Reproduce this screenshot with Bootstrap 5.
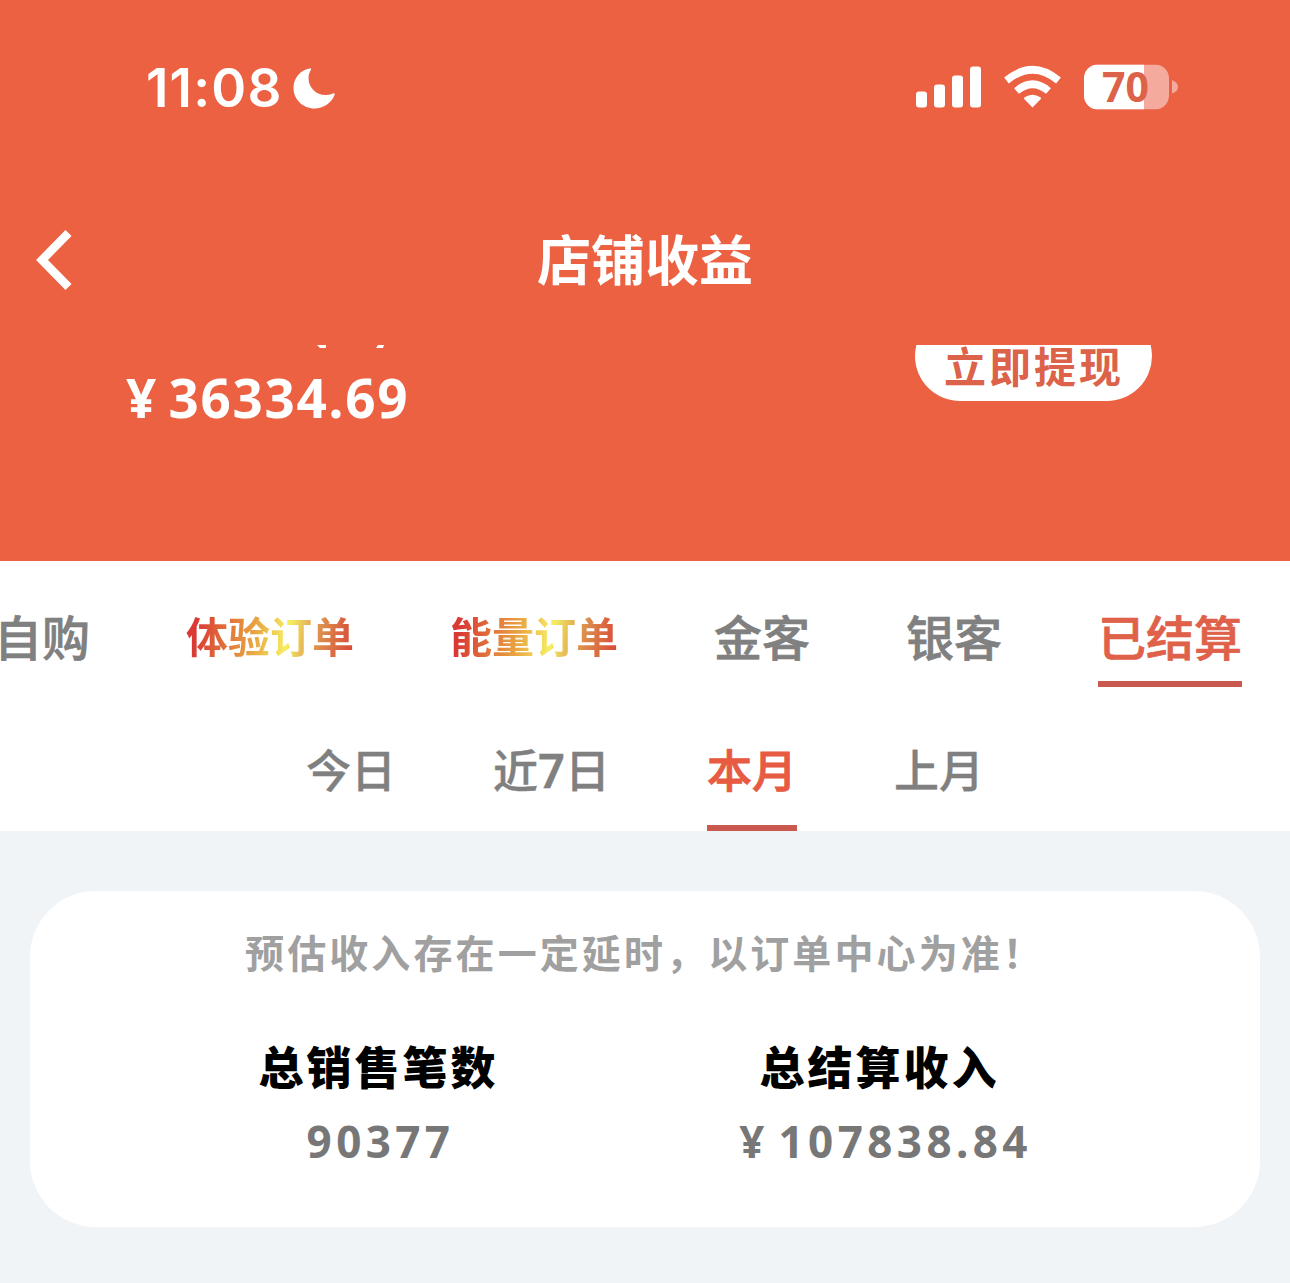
<!DOCTYPE html>
<html lang="zh-CN">
<head>
<meta charset="utf-8">
<meta name="viewport" content="width=device-width, initial-scale=1">
<title>店铺收益</title>
<link rel="stylesheet" href="https://cdn.jsdelivr.net/npm/bootstrap@5.3.0/dist/css/bootstrap.min.css">
<style>
  :root { --brand: #eb6142; --accent: #c9584e; --page: #f1f4f7; }
  body { background: var(--page); font-family: "Noto Sans", "Noto Sans CJK SC", sans-serif; overflow: hidden; }
  .cjk { font-family: "Noto Sans CJK SC", sans-serif; }
  .brand-bg { background: var(--brand); }
  .status-bar { height: 175px; padding: 0 112px 0 146px; }
  .clock { font: 600 53px/60px Inter, sans-serif; letter-spacing: 1.2px; }
  .title-bar { height: 170px; padding: 0 0 4px 36px; display: grid; grid-template-columns: 36px 1fr 72px; }
  .title-bar svg { margin-top: 3px; }
  .title-text { font-size: 54px; line-height: 60px; font-weight: 700; }
  .balance { height: 216px; padding: 0 138px 0 126px; }
  .amount { font-size: 53px; line-height: 60px; font-weight: 700; letter-spacing: 1.7px; word-spacing: -5px; margin-top: 19px; }
  .withdraw { width: 237px; height: 90px; margin-top: -34px; padding: 17px 0 0 1px; border: 0; border-radius: 45px; background: #fff; color: #dc6249; font-size: 42px; line-height: 60px; font-weight: 700; letter-spacing: 3px; }
  .tabs { height: 135px; padding: 44px 48px 0 0; gap: 96px; }
  .tab-item { font-size: 48px; line-height: 60px; font-weight: 500; color: #808080; -webkit-text-stroke: .7px currentColor; white-space: nowrap; flex: none; height: 82px; }
  .tab-item.on { color: #e0614a; border-bottom: 6px solid var(--accent); }
  .tab-fancy { font-size: 42px; font-weight: 700; line-height: 60px; height: 60px; white-space: nowrap; flex: none; background: linear-gradient(100deg, #d93a34 8%, #e8a040 40%, #f6ee62 60%, #dd9a50 75%, #d94a38 97%); -webkit-background-clip: text; background-clip: text; color: transparent; }
  .periods { height: 135px; gap: 97px; padding-top: 43px; }
  .period { font-size: 45px; line-height: 60px; font-weight: 500; color: #808080; -webkit-text-stroke: .4px currentColor; height: 92px; white-space: nowrap; }
  .period.on { color: #e75b43; border-bottom: 6px solid var(--accent); -webkit-text-stroke-width: .9px; }
  .seven { font-family: "Noto Sans", sans-serif; font-weight: 600; font-size: 47px; line-height: 1; }
  .summary { margin: 60px 30px 0; height: 336px; border: 0; border-radius: 66px; }
  .note { font-size: 39px; line-height: 60px; letter-spacing: 3.1px; font-weight: 700; color: #a0a0a0; padding-top: 30px; }
  .figures { margin: 55px 130px 0 98px; }
  .fig-name { font-size: 45px; line-height: 60px; letter-spacing: 3px; font-weight: 900; color: #000; }
  .fig-value { font-size: 44px; line-height: 60px; letter-spacing: 4.4px; font-weight: 700; color: #777; margin-top: 15px; padding-left: 4px; }
  .fig-money { word-spacing: -6px; padding-left: 12px; }
</style>
</head>
<body>
<header class="brand-bg text-white">
  <div class="status-bar d-flex align-items-center justify-content-between">
    <div class="d-flex align-items-center">
      <span class="clock">11:08</span>
      <svg class="ms-2" width="46" height="46" viewBox="0 0 46 46" fill="#fff"><path d="M18.500 3.500C8.500 5.500 2.500 13.500 2.500 23C2.500 34.500 12 43.500 23.500 43.500C32.500 43.500 40.500 38 43.500 30C44 28.500 43.300 28 42 28.500C39.500 29.500 37 30 34.500 30C25 30 17.500 22.500 17.500 13C17.500 10.300 18.300 7.500 19.800 5C20.500 3.800 20 3.200 18.500 3.500Z"/></svg>
    </div>
    <svg width="264" height="50" viewBox="914 62.500 264 50">
      <g fill="#fff">
        <rect x="916" y="91" width="11" height="16" rx="3"/><rect x="934" y="84" width="11" height="23" rx="3"/>
        <rect x="952" y="75" width="11" height="32" rx="3"/><rect x="970" y="66" width="11" height="41" rx="3"/>
        <path d="M1032.500 107L1024.200 98.500Q1023.600 97.500 1024.600 96.800Q1032.500 91.500 1040.400 96.800Q1041.400 97.500 1040.800 98.500Z"/>
      </g>
      <g fill="none" stroke="#fff" stroke-width="7.500">
        <path d="M1006.500 80Q1032.500 58.500 1058.500 80"/><path d="M1016.500 90.500Q1032.500 77 1048.500 90.500"/>
      </g>
      <clipPath id="cell"><rect x="1084" y="64" width="85" height="45" rx="14"/></clipPath>
      <g clip-path="url(#cell)"><rect x="1084" y="64" width="85" height="45" fill="#f4aa9c"/><rect x="1084" y="64" width="60" height="45" fill="#fff"/></g>
      <path d="M1172 79.500Q1178 82 1178 86.500T1172 93Z" fill="#f4aa9c"/>
      <text x="1125.500" y="101" text-anchor="middle" font-family="Noto Sans, sans-serif" font-weight="700" font-size="41" fill="#dc6249">70</text>
    </svg>
  </div>
  <nav class="title-bar align-items-center">
    <svg width="36" height="62" viewBox="0 0 36 62" fill="none" stroke="#fff" stroke-width="8.500"><path d="M32.500 4L6 31L32.500 58"/></svg>
    <h1 class="title-text cjk text-center mb-0">店铺收益</h1>
  </nav>
  <section class="balance d-flex justify-content-between align-items-start overflow-hidden">
    <div>
      <svg class="d-block" width="283" height="4" viewBox="126 345 283 4" fill="#fff"><path d="M317 345H326V348H320ZM378 345H384L383 348H376Z"/></svg>
      <div class="amount">¥ 36334.69</div>
    </div>
    <button class="withdraw cjk" type="button">立即提现</button>
  </section>
</header>
<main>
  <div class="bg-white">
    <div class="tabs d-flex justify-content-end cjk">
      <div class="tab-item">自购</div><div class="tab-fancy">体验订单</div><div class="tab-fancy">能量订单</div>
      <div class="tab-item">金客</div><div class="tab-item">银客</div><div class="tab-item on">已结算</div>
    </div>
    <div class="periods d-flex justify-content-center cjk">
      <div class="period">今日</div><div class="period">近<span class="seven">7</span>日</div><div class="period on">本月</div><div class="period">上月</div>
    </div>
  </div>
  <section class="summary card">
    <div class="note cjk text-center">预估收入存在一定延时，以订单中心为准！</div>
    <div class="figures row gx-0 text-center">
      <div class="col-6"><div class="fig-name cjk">总销售笔数</div><div class="fig-value">90377</div></div>
      <div class="col-6"><div class="fig-name cjk">总结算收入</div><div class="fig-value fig-money">¥ 107838.84</div></div>
    </div>
  </section>
</main>
<script src="https://cdn.jsdelivr.net/npm/bootstrap@5.3.0/dist/js/bootstrap.bundle.min.js"></script>
</body>
</html>
